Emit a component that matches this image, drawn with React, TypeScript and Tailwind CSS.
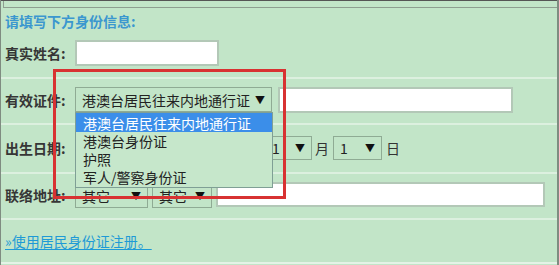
import React from "react";

const font = { fontFamily: '"Noto Sans CJK SC", "Noto Sans", sans-serif' };

function Sel({ w, text, cls = "" }: { w: string; text: string; cls?: string }) {
  return (
    <div className={`${w} ${cls} h-[24px] border border-[#8fab94] flex items-center justify-between pl-[6px] pr-[6px] text-[14px] text-[#222] leading-none`}>
      <span>{text}</span>
      <span className="text-[10px] text-[#111]">▼</span>
    </div>
  );
}

function Sep() {
  return <div className="h-[2px] bg-[#dcf0df]" />;
}

function Label({ children }: { children: React.ReactNode }) {
  return <div className="w-[70px] shrink-0 text-[14px] font-bold text-[#363636] leading-none">{children}</div>;
}

export default function App() {
  return (
    <div style={font} className="relative w-[559px] h-[265px] overflow-hidden bg-[#c2e5c8] border-l border-r-2 border-[#7f8c81]">
      <div className="h-[8px] border-t border-[#555]">
        <div className="ml-[2px] h-full border-l border-b border-[#8e9e90]" />
      </div>
      <div className="h-[26px] flex items-center px-[4px] text-[14px] font-bold text-[#3b97cf] leading-none">请填写下方身份信息:</div>
      <div className="h-[43px] flex items-start pt-[6px] px-[4px]">
        <div className="h-[26px] flex items-center"><Label>真实姓名:</Label></div>
        <div className="w-[144px] h-[26px] bg-white border-2 border-[#b3c8b7]" />
      </div>
      <Sep />
      <div className="h-[44px] flex items-start pt-[8px] px-[4px]">
        <div className="h-[25px] flex items-center"><Label>有效证件:</Label></div>
        <Sel w="w-[197px]" cls="h-[25px] border-[#7e9fa8]" text="港澳台居民往来内地通行证" />
        <div className="ml-[6px] w-[235px] h-[26px] bg-white border-2 border-[#b3c8b7]" />
      </div>
      <Sep />
      <div className="h-[47px] flex items-start pt-[11px] px-[4px]">
        <div className="h-[24px] flex items-center"><Label>出生日期:</Label></div>
        <Sel w="w-[185px]" text="" />
        <Sel w="w-[47px]" cls="ml-[5px]" text="1" />
        <div className="h-[24px] flex items-center pl-[3px] pr-[4px] text-[14px] text-[#333]">月</div>
        <Sel w="w-[49px]" text="1" />
        <div className="h-[24px] flex items-center pl-[4px] text-[14px] text-[#333]">日</div>
      </div>
      <Sep />
      <div className="h-[44px] flex items-start pt-[8px] px-[4px]">
        <div className="h-[25px] flex items-center"><Label>联络地址:</Label></div>
        <Sel w="w-[73px]" cls="mt-[2px] h-[23px]" text="其它" />
        <Sel w="w-[60px]" cls="ml-[4px] mt-[2px] h-[23px]" text="其它" />
        <div className="ml-[4px] w-[329px] h-[25px] bg-white border-2 border-[#b3c8b7]" />
      </div>
      <Sep />
      <div className="h-[42px] flex items-center px-[4px]">
        <a className="text-[14px] text-[#1e9ad6] underline underline-offset-2 leading-none">»使用居民身份证注册。</a>
      </div>
      <div className="h-[2px] bg-[#e4f3e6]" />

      <div className="absolute left-[74px] top-[112px] w-[198px] h-[76px] bg-[#c6e7cb] border border-[#7f9f95] text-[14px] text-[#222] leading-none flex flex-col">
        <div className="h-[19px] bg-[#3b8ee9] text-white flex items-center pl-[7px]">港澳台居民往来内地通行证</div>
        <div className="h-[18px] flex items-center pl-[7px]">港澳台身份证</div>
        <div className="h-[18px] flex items-center pl-[7px]">护照</div>
        <div className="h-[18px] flex items-center pl-[7px]">军人/警察身份证</div>
      </div>

      <div className="absolute left-[52px] top-[69px] w-[233px] h-[130px] border-[3px] border-[#d83232]" />
    </div>
  );
}
